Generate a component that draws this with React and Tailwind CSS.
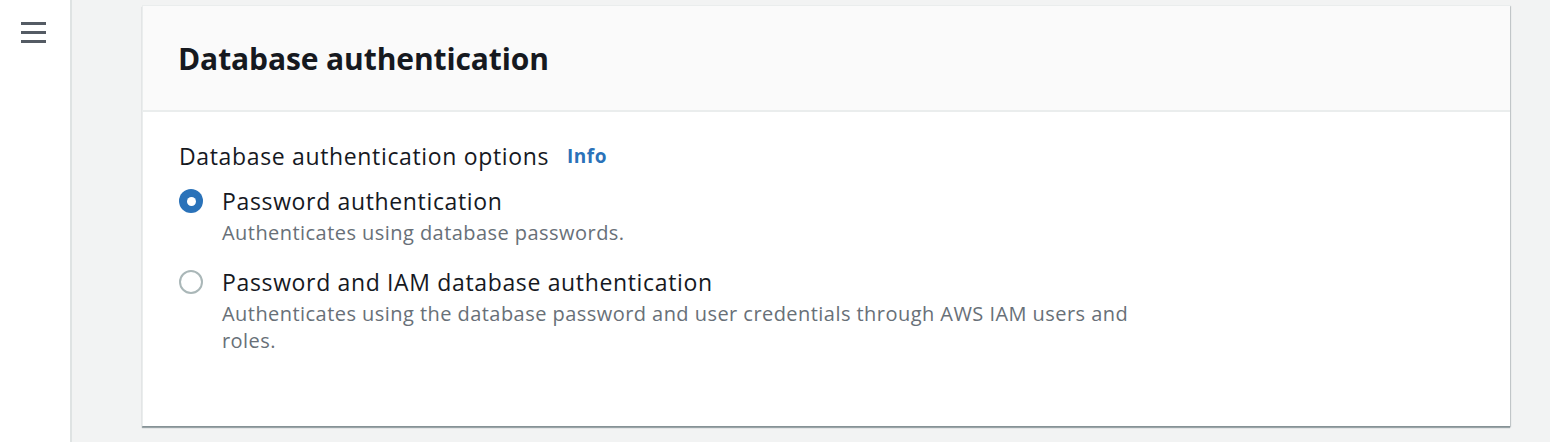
export default function App() {
  const font = { fontFamily: '"Open Sans", "Noto Sans", sans-serif' };
  return (
    <div className="flex h-[442px] w-[1550px] bg-[#f2f3f3]" style={font}>
      <div className="w-[72px] shrink-0 bg-white border-r-2 border-[#dfe3e3] pt-[22px] pl-[21px]">
        <div className="flex flex-col gap-[6px]">
          <span className="block w-[25px] h-[3px] bg-[#545b64]" />
          <span className="block w-[25px] h-[3px] bg-[#545b64]" />
          <span className="block w-[25px] h-[3px] bg-[#545b64]" />
        </div>
      </div>
      <div className="flex-1 pl-[70px] pr-[40px] pt-[5px]">
        <div className="bg-white border-t border-l border-[#eaeded] shadow-[0_2px_1px_rgba(0,28,36,0.35),1px_1px_1px_rgba(0,28,36,0.15)] h-[421px]">
          <div className="bg-[#fafafa] border-b-2 border-[#eaeded] h-[106px] flex items-center pl-[35px]">
            <h2 className="text-[30px] font-bold text-[#16191f] tracking-[-0.1px]">Database authentication</h2>
          </div>
          <div className="pl-[36px] pt-[28px]">
            <div className="flex items-center h-[33px] text-[23px] tracking-[0.65px] text-[#16191f]">
              <span>Database authentication options</span>
              <span className="ml-[18px] text-[19px] font-bold tracking-[0.5px] text-[#2a72b9]">Info</span>
            </div>
            <div className="mt-[13px] flex">
              <div className="w-[43px] shrink-0 pt-[3px]">
                <div className="w-[24px] h-[24px] rounded-full bg-[#2a72b9] flex items-center justify-center">
                  <div className="w-[9px] h-[9px] rounded-full bg-white" />
                </div>
              </div>
              <div>
                <div className="text-[23px] leading-[30px] tracking-[0.65px] text-[#16191f]">Password authentication</div>
                <div className="mt-[3px] text-[20px] leading-[27px] tracking-[0.45px] text-[#687078]">Authenticates using database passwords.</div>
              </div>
            </div>
            <div className="mt-[21px] flex">
              <div className="w-[43px] shrink-0 pt-[3px]">
                <div className="w-[24px] h-[24px] rounded-full border-2 border-[#aab7b8] bg-white" />
              </div>
              <div className="max-w-[920px]">
                <div className="text-[23px] leading-[30px] tracking-[0.65px] text-[#16191f]">Password and IAM database authentication</div>
                <div className="mt-[3px] text-[20px] leading-[27px] tracking-[0.45px] text-[#687078]">
                  Authenticates using the database password and user credentials through AWS IAM users and roles.
                </div>
              </div>
            </div>
          </div>
        </div>
      </div>
    </div>
  );
}
